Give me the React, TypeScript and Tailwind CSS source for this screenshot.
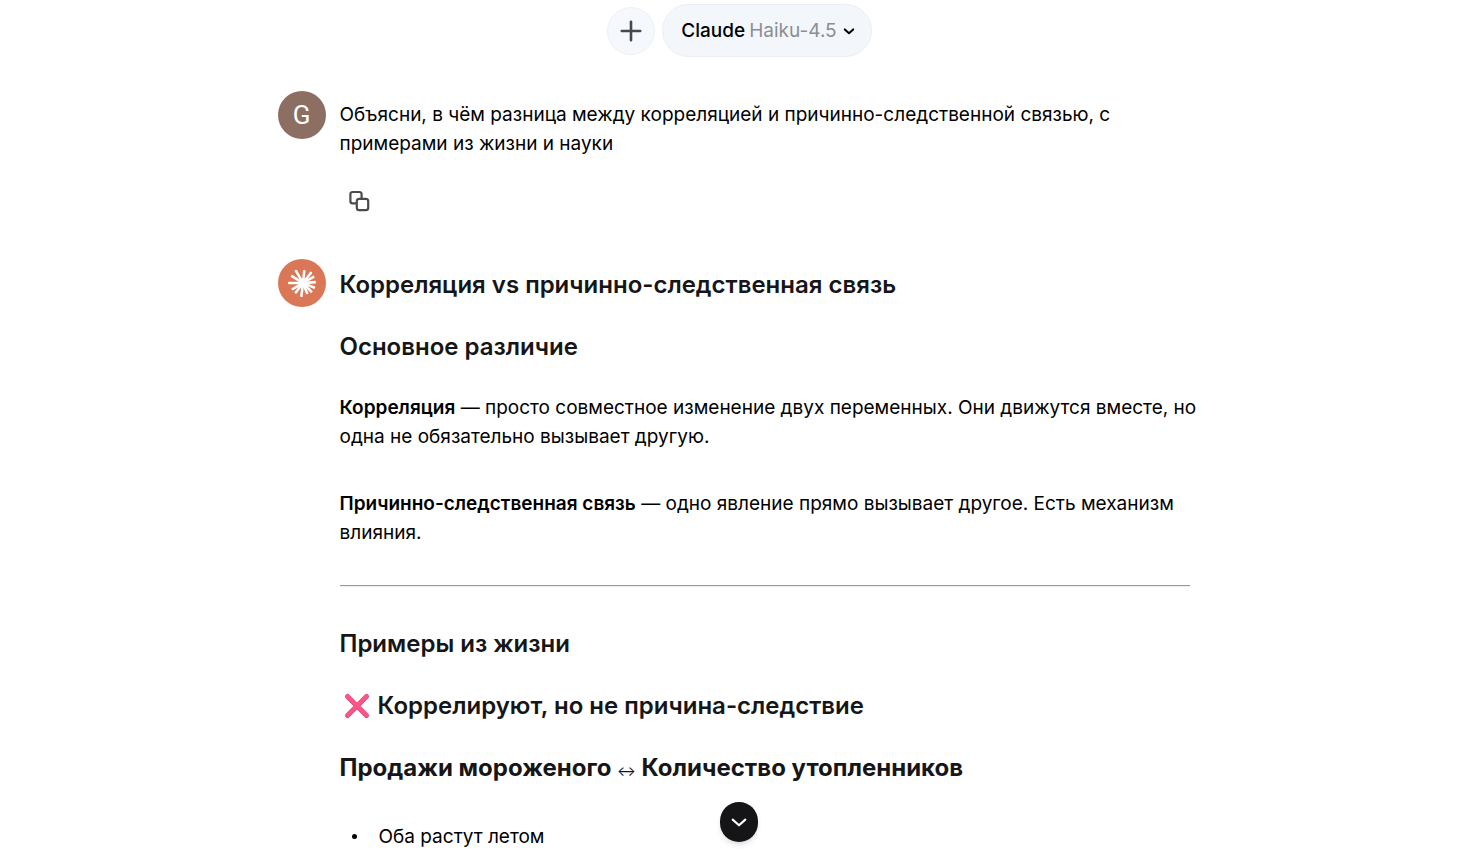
import type { ReactNode } from 'react'

// [angle, length] of every ray of the assistant's mark
const rays = [
  [6, 13], [38, 14], [60, 13], [86, 13], [112, 13], [136, 13],
  [158, 12], [187, 14], [217, 13], [240, 13], [270, 15], [302, 14], [330, 15],
]

function PlusIcon() {
  return (
    <svg className="size-6" viewBox="0 0 24 24" fill="none" stroke="#48484a" strokeWidth={2.6} strokeLinecap="round" aria-hidden="true">
      <path d="M12 2.8v18.4M2.8 12h18.4" />
    </svg>
  )
}

function ChevronIcon({ className, strokeWidth = 2 }: { className: string; strokeWidth?: number }) {
  return (
    <svg className={className} viewBox="0 0 16 16" fill="none" stroke="currentColor" strokeWidth={strokeWidth} strokeLinecap="round" strokeLinejoin="round" aria-hidden="true">
      <path d="M3.8 6.4 8 10.2 12.2 6.4" />
    </svg>
  )
}

function CopyIcon() {
  return (
    <svg className="size-6" viewBox="0 0 24 24" fill="none" stroke="#4b4b4d" strokeWidth={2.2} aria-hidden="true">
      <path d="M9 14.4H5.6A2.2 2.2 0 0 1 3.4 12.2V5.2A2.2 2.2 0 0 1 5.6 3h6.8a2.2 2.2 0 0 1 2.2 2.2V9" />
      <rect x="9.8" y="9.8" width="11.4" height="11.4" rx="2.4" />
    </svg>
  )
}

function BurstIcon() {
  return (
    <svg className="size-12" viewBox="0 0 48 48" fill="#fff" aria-hidden="true">
      {rays.map(([angle, length]) => (
        <path
          key={angle}
          transform={`rotate(${angle} 25 24)`}
          d={`M23.8 24 L23.7 ${24.4 - length} Q25 ${23.4 - length} 26.3 ${24.4 - length} L26.2 24Z`}
        />
      ))}
      <circle cx="25" cy="24" r="4.6" />
    </svg>
  )
}

function CrossIcon() {
  return (
    <svg className="inline-block size-8 shrink-0" viewBox="0 0 32 32" fill="none" strokeLinecap="round" role="img" aria-label="Нет">
      <path d="M7.5 6.5 26.5 25.5M26.5 6.5 7.5 25.5" stroke="#e5487c" strokeWidth={5} />
      <path d="M7.5 6 26.5 25M26.5 6 7.5 25" stroke="#ff5586" strokeWidth={3.6} />
    </svg>
  )
}

function Heading({ children }: { children: ReactNode }) {
  return <h3 className="flex items-center text-2xl font-semibold text-[#161618]">{children}</h3>
}

export default function App() {
  return (
    <div className="relative h-screen overflow-hidden bg-white pr-1 font-['Inter','Liberation_Sans',sans-serif] text-[19px]/[29px] text-black">
      <header className="flex items-center justify-center gap-[7px] pt-1">
        <button
          type="button"
          aria-label="Новый чат"
          className="flex size-12 items-center justify-center rounded-full border border-[#edf1f6] bg-[#f5f8fd]"
        >
          <PlusIcon />
        </button>
        <button
          type="button"
          className="flex h-[53px] items-center gap-1 rounded-full border border-[#e9eff5] bg-[#f3f7fc] pr-3.5 pl-[18px]"
        >
          <span className="font-medium">Claude</span>
          <span className="text-[#8c8e91]">Haiku-4.5</span>
          <ChevronIcon className="size-4" />
        </button>
      </header>

      <main className="mx-auto flex max-w-[924px] flex-col pt-[34px] pr-3">
        <article className="flex gap-3.5">
          <div className="flex size-12 shrink-0 items-center justify-center rounded-full bg-[#8d6e63] font-['Roboto',sans-serif] text-[26px] text-white">
            G
          </div>
          <div className="min-w-0 flex-1 pt-[9px] pr-4">
            <p>Объясни, в чём разница между корреляцией и причинно-следственной связью, с примерами из жизни и науки</p>
            <button type="button" aria-label="Копировать" className="mt-[23px] flex h-10 w-[38px] items-center justify-center">
              <CopyIcon />
            </button>
          </div>
        </article>

        <article className="mt-[38px] flex gap-3.5">
          <div className="size-12 shrink-0 rounded-full bg-[#d97757]">
            <BurstIcon />
          </div>
          <div className="flex min-w-0 flex-1 flex-col gap-[38px] pt-2.5">
            <div className="flex flex-col gap-[30px]">
              <Heading>Корреляция vs причинно-следственная связь</Heading>
              <Heading>Основное различие</Heading>
              <p className="-mr-2">
                <strong className="font-semibold">Корреляция</strong> — просто совместное изменение двух переменных. Они движутся вместе, но одна не обязательно вызывает другую.
              </p>
            </div>
            <p>
              <strong className="font-semibold">Причинно-следственная связь</strong> — одно явление прямо вызывает другое. Есть механизм влияния.
            </p>
            <hr className="border-t border-b border-t-[#999] border-b-[#eee]" />
            <div className="flex flex-col gap-[30px] pt-[3px]">
              <Heading>Примеры из жизни</Heading>
              <Heading>
                <CrossIcon />
                <span className="ml-1.5">Коррелируют, но не причина-следствие</span>
              </Heading>
              <h3 className="text-2xl font-bold text-[#161618]">
                Продажи мороженого <span className="text-sm font-normal">↔</span> Количество утопленников
              </h3>
            </div>
            <ul className="pl-3">
              <li className="flex items-center gap-[22px]">
                <span className="size-[5px] rounded-full bg-black" />
                Оба растут летом
              </li>
            </ul>
          </div>
        </article>
      </main>

      <button
        type="button"
        aria-label="Прокрутить вниз"
        className="absolute bottom-4 left-1/2 -ml-[22px] flex h-10 w-[38px] items-center justify-center rounded-full bg-[#151517] text-white shadow-md"
      >
        <ChevronIcon className="size-6" strokeWidth={1.4} />
      </button>
    </div>
  )
}
